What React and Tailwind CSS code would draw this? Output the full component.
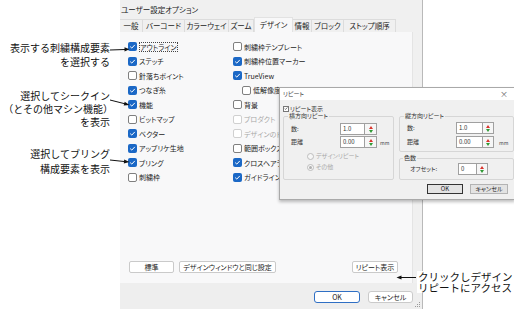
import React from 'react';

const col1 = [
  { label: 'アウトライン', checked: true, focus: true },
  { label: 'ステッチ', checked: true },
  { label: '針落ちポイント' },
  { label: 'つなぎ糸', checked: true },
  { label: '機能', checked: true },
  { label: 'ビットマップ' },
  { label: 'ベクター', checked: true },
  { label: 'アップリケ生地', checked: true },
  { label: 'ブリング', checked: true },
  { label: '刺繍枠' },
];

const col2 = [
  { label: '刺繍枠テンプレート' },
  { label: '刺繍枠位置マーカー', checked: true },
  { label: 'TrueView', checked: true },
  { label: '低解像度', indent: true },
  { label: '背景' },
  { label: 'プロダクト', disabled: true },
  { label: 'デザインのドット', disabled: true },
  { label: '範囲ボックス' },
  { label: 'クロスヘアライン', checked: true },
  { label: 'ガイドライン', checked: true },
];

const tabs = [
  { label: '一般', w: 'w-[23px]' },
  { label: 'バーコード', w: 'w-[42px]' },
  { label: 'カラーウェイ', w: 'w-[44px]' },
  { label: 'ズーム', w: 'w-[25px]' },
  { label: 'デザイン', w: 'w-[39px]', active: true },
  { label: '情報', w: 'w-[19px]' },
  { label: 'ブロック', w: 'w-[32px]' },
  { label: 'ストップ順序', w: 'w-[52px]' },
];

function Check({ checked, disabled }) {
  if (checked) {
    return (
      <span className="flex h-[9px] w-[9px] shrink-0 items-center justify-center rounded-[2px] bg-[#1b68c6]">
        <svg width="7" height="7" viewBox="0 0 7 7">
          <path d="M1.2 3.6 2.8 5.1 5.8 1.9" fill="none" stroke="white" strokeWidth="1" />
        </svg>
      </span>
    );
  }
  return (
    <span
      className={`h-[9px] w-[9px] shrink-0 rounded-[2px] border bg-white ${
        disabled ? 'border-[#d0d0d0]' : 'border-[#7f7f7f]'
      }`}
    />
  );
}

function Option({ label, checked, disabled, indent, focus }) {
  return (
    <div className={`flex h-[14.5px] items-center gap-[2px] ${indent ? 'pl-[9px]' : ''}`}>
      <Check checked={checked} disabled={disabled} />
      <span
        className={`whitespace-nowrap text-[7px] leading-[8px] ${
          disabled ? 'text-[#a8a8a8]' : 'text-[#1c1c1c]'
        } ${focus ? 'border border-dotted border-[#444]' : ''}`}
      >
        {label}
      </span>
    </div>
  );
}

function PanelButton({ children, w }) {
  return (
    <div className={`flex h-[12px] items-center justify-center rounded-[2px] border border-[#cacaca] bg-white text-[7px] leading-none text-[#222] ${w}`}>
      {children}
    </div>
  );
}

function Spin({ w }) {
  return (
    <span className={`flex h-[12px] items-center justify-center border border-l-0 border-[#a0a0a0] bg-[#f6f6f6] ${w}`}>
      <svg width="4" height="7" viewBox="0 0 4 7">
        <path d="M2 0 4 3H0z" fill="#d8342c" />
        <path d="M2 7 4 4H0z" fill="#2f9a35" />
      </svg>
    </span>
  );
}

function NumField({ label, value, labelW, inputW, spinW, unit, unitGap }) {
  return (
    <div className="flex h-[12px] items-center">
      <span className={`text-[6px] leading-none text-[#333] ${labelW}`}>{label}</span>
      <span className={`flex h-[12px] items-center border border-[#a0a0a0] bg-white pl-[2px] text-[6px] leading-none text-[#333] ${inputW}`}>
        {value}
      </span>
      <Spin w={spinW} />
      {unit && <span className={`text-[5px] leading-none text-[#444] ${unitGap}`}>{unit}</span>}
    </div>
  );
}

function Radio({ label, on }) {
  return (
    <div className="flex h-[10px] items-center gap-[2px] pl-[16px]">
      <span className="flex h-[7px] w-[7px] items-center justify-center rounded-full border border-[#bdbdbd] bg-[#f6f6f6]">
        {on && <span className="h-[3px] w-[3px] rounded-full bg-[#b0b0b0]" />}
      </span>
      <span className="text-[6px] leading-none text-[#a8a8a8]">{label}</span>
    </div>
  );
}

function RepeatDialog() {
  return (
    <div className="absolute left-[279px] top-[87px] flex h-[113px] w-[236px] flex-col border border-[#a9a9a9] bg-[#f0f0f0] shadow-[0_2px_3px_rgba(0,0,0,0.25)]">
      <div className="flex h-[12px] items-center justify-between bg-white pl-[3px] pr-[6px]">
        <span className="text-[6px] leading-none text-[#444]">リピート</span>
        <span className="text-[8px] leading-none text-[#666]">×</span>
      </div>
      <div className="flex flex-1 flex-col pl-[3px]">
        <div className="mt-[5px] flex h-[7px] items-center gap-[1px]">
          <span className="flex h-[6px] w-[6px] items-center justify-center border border-[#777] bg-white">
            <svg width="5" height="5" viewBox="0 0 5 5">
              <path d="M0.8 2.5 2 3.7 4.2 1.2" fill="none" stroke="#333" strokeWidth="0.8" />
            </svg>
          </span>
          <span className="text-[6px] leading-none text-[#333]">リピート表示</span>
        </div>
        <div className="mt-[1px] flex gap-[5px]">
          <fieldset className="h-[67px] w-[111px] rounded-[2px] border border-[#d6d6d6] pl-[7px]">
            <legend className="-ml-[3px] px-[1px] text-[6px] leading-[6px] text-[#333]">横方向リピート</legend>
            <div className="mt-[4px] flex flex-col gap-[1px]">
              <NumField label="数:" value="1.0" labelW="w-[49px]" inputW="w-[25px]" spinW="w-[12px]" />
              <NumField label="距離" value="0.00" labelW="w-[49px]" inputW="w-[25px]" spinW="w-[12px]" unit="mm" unitGap="ml-[3px]" />
            </div>
            <div className="mt-[3px] flex flex-col gap-[1px]">
              <Radio label="デザインリピート" />
              <Radio label="その他" on />
            </div>
          </fieldset>
          <div className="flex w-[115px] flex-col gap-[3px]">
            <fieldset className="h-[39px] rounded-[2px] border border-[#d6d6d6] pl-[7px]">
              <legend className="-ml-[3px] px-[1px] text-[6px] leading-[6px] text-[#333]">縦方向リピート</legend>
              <div className="mt-[3px] flex flex-col gap-[2px]">
                <NumField label="数:" value="1.0" labelW="w-[49px]" inputW="w-[27px]" spinW="w-[11px]" />
                <NumField label="距離" value="0.00" labelW="w-[49px]" inputW="w-[27px]" spinW="w-[11px]" unit="mm" unitGap="ml-[5px]" />
              </div>
            </fieldset>
            <fieldset className="h-[25px] rounded-[2px] border border-[#d6d6d6] pl-[10px]">
              <legend className="-ml-[7px] px-[1px] text-[6px] leading-[6px] text-[#333]">色数</legend>
              <div className="mt-[2px]">
                <NumField label="オフセット:" value="0" labelW="w-[48px]" inputW="w-[19px]" spinW="w-[11px]" />
              </div>
            </fieldset>
          </div>
        </div>
        <div className="mb-[5px] mt-auto flex justify-end gap-[7px] pr-[6px]">
          <div className="flex h-[10px] w-[36px] items-center justify-center border border-[#333] bg-[#e3e3e3] text-[6px] leading-none text-[#222]">OK</div>
          <div className="flex h-[10px] w-[38px] items-center justify-center border border-[#b3b3b3] bg-[#e3e3e3] text-[6px] leading-none text-[#222]">キャンセル</div>
        </div>
      </div>
    </div>
  );
}

function Arrows() {
  return (
    <svg className="pointer-events-none absolute left-0 top-0" width="514" height="335">
      <g stroke="#111" strokeWidth="1" fill="#111">
        <line x1="110" y1="50" x2="125" y2="49.5" />
        <polygon points="129.5,49.3 124.5,47.3 124.5,51.5" stroke="none" />
        <line x1="110" y1="100" x2="125" y2="103.8" />
        <polygon points="129.5,105 124.7,101.8 123.7,105.6" stroke="none" />
        <line x1="110" y1="160" x2="125" y2="161.6" />
        <polygon points="129.5,162 124.2,159.5 123.8,163.5" stroke="none" />
        <line x1="416" y1="277.5" x2="401" y2="277.5" />
        <polygon points="396.5,277.5 401.5,275.5 401.5,279.5" stroke="none" />
      </g>
    </svg>
  );
}

export default function App() {
  return (
    <div className="relative flex h-[335px] w-[514px] overflow-hidden bg-white font-['Noto_Sans_CJK_JP',sans-serif] [font-feature-settings:'palt']">
      <div className="flex w-[120px] shrink-0 flex-col items-end pr-[10px] text-right text-[10px] text-[#111] [font-feature-settings:normal]">
        <div className="mt-[41px] leading-[14px]">
          <div>表示する刺繍構成要素</div>
          <div>を選択する</div>
        </div>
        <div className="mt-[20px] leading-[13px]">
          <div>選択してシークイン</div>
          <div className="-mr-[3px]">（とその他マシン機能）</div>
          <div>を表示</div>
        </div>
        <div className="mt-[17.5px] leading-[15px]">
          <div>選択してブリング</div>
          <div>構成要素を表示</div>
        </div>
      </div>

      <div className="flex h-[309px] w-[303px] shrink-0 flex-col border-r border-[#b9b9b9] bg-[#f0f0f0]">
        <div className="h-[17px] pl-[1px] pt-[6px] text-[7.5px] leading-[8px] text-[#222]">ユーザー設定オプション</div>
        <div className="flex h-[15px] items-end">
          {tabs.map((t) => (
            <div
              key={t.label}
              className={`flex items-center justify-center whitespace-nowrap text-[7.5px] leading-none text-[#222] ${t.w} ${
                t.active
                  ? 'h-[15px] border-x border-t border-[#e2e2e2] bg-[#f8f8f9]'
                  : 'h-[13px] border-r border-t border-[#dcdcdc]'
              }`}
            >
              {t.label}
            </div>
          ))}
        </div>
        <div className="flex h-[251px]">
          <div className="flex w-[293px] flex-col border-r border-[#e4e4e4] bg-[#f8f8f9]">
            <div className="flex flex-1 pl-[8px] pt-[7.5px]">
              <div className="flex w-[105px] flex-col">
                {col1.map((o) => (
                  <Option key={o.label} {...o} />
                ))}
              </div>
              <div className="flex flex-col">
                {col2.map((o) => (
                  <Option key={o.label} {...o} />
                ))}
              </div>
            </div>
            <div className="flex items-center gap-[5px] pb-[10px] pl-[9px] pr-[14px]">
              <PanelButton w="w-[45px]">標準</PanelButton>
              <PanelButton w="w-[97px]">デザインウィンドウと同じ設定</PanelButton>
              <div className="ml-auto">
                <PanelButton w="w-[46px]">リピート表示</PanelButton>
              </div>
            </div>
          </div>
        </div>
        <div className="relative flex h-[26px] justify-end gap-[8px] bg-[#eeeeee] pr-[9px] pt-[8px]">
          <div className="flex h-[12px] w-[46px] items-center justify-center rounded-[3px] border border-[#2f6fc4] bg-white text-[7px] leading-none text-[#222]">OK</div>
          <div className="flex h-[12px] w-[45px] items-center justify-center rounded-[3px] border border-[#cacaca] bg-white text-[7px] leading-none text-[#222]">キャンセル</div>
          <svg className="absolute bottom-[1px] right-[1px]" width="6" height="6" viewBox="0 0 6 6">
            <g fill="#9a9a9a">
              <rect x="4" y="0" width="1" height="1" />
              <rect x="2" y="2" width="1" height="1" />
              <rect x="4" y="2" width="1" height="1" />
              <rect x="0" y="4" width="1" height="1" />
              <rect x="2" y="4" width="1" height="1" />
              <rect x="4" y="4" width="1" height="1" />
            </g>
          </svg>
        </div>
      </div>

      <RepeatDialog />

      <div className="absolute left-[417px] top-[271px] bg-white pl-[1px] text-[10.5px] leading-[11px] text-[#111] [font-feature-settings:normal]">
        <div className="whitespace-nowrap">クリックしデザイン</div>
        <div className="whitespace-nowrap">リピートにアクセス</div>
      </div>

      <Arrows />
    </div>
  );
}
